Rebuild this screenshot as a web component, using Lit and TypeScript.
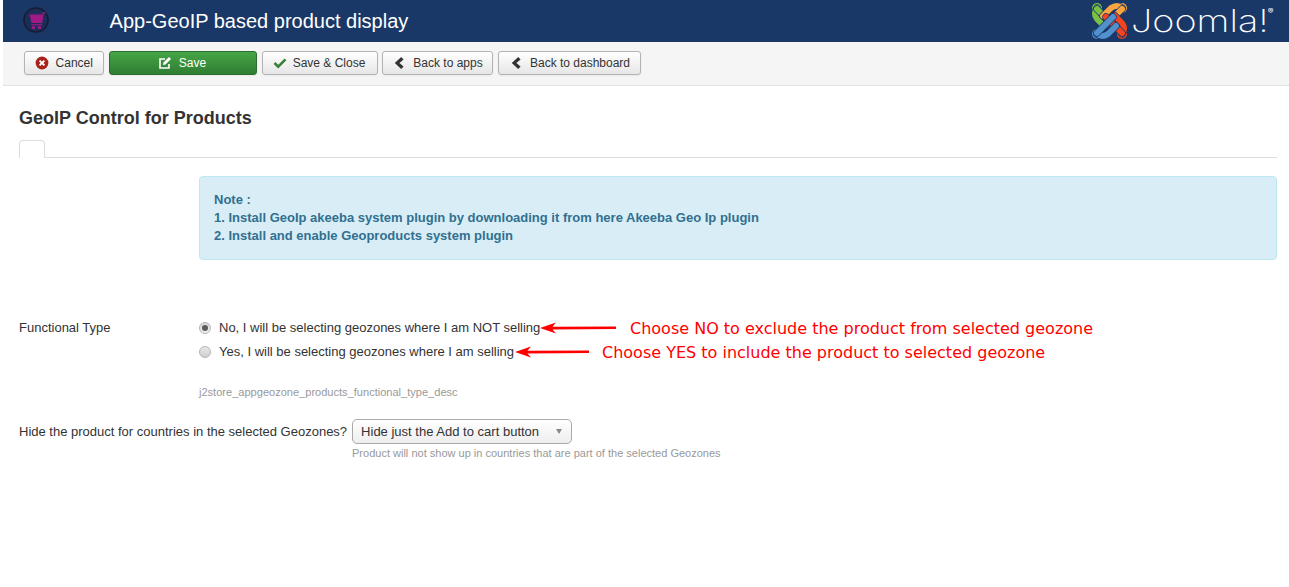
import { LitElement, html, css, svg } from "lit";
import { customElement } from "lit/decorators.js";

const chevron = svg`<path d="M9.2 1 L11.6 3.4 L7.4 7 L11.6 10.6 L9.2 13 L2.8 7 Z" fill="#333"/>`;

const band = (d: string, color: string) => svg`
  <path d=${d} stroke="#1a3867" stroke-width="7.4"/>
  <path d=${d} stroke=${color} stroke-width="6"/>`;

@customElement("app-root")
export class AppRoot extends LitElement {
  static styles = css`
    :host { display: block; height: 587px; overflow: hidden; position: relative; background: #fff; font-family: "Liberation Sans", Arial, sans-serif; font-size: 13px; line-height: 18px; color: #333; }
    .head { margin-left: 3px; height: 42px; background: #1a3867; display: flex; align-items: center; position: relative; }
    .cart { margin-left: 20px; width: 28px; height: 28px; flex: none; }
    .title { margin-left: 58.6px; color: #fff; font-size: 20px; line-height: 40px; }
    .logo { margin-left: auto; margin-right: 17px; display: flex; align-items: center; height: 42px; }
    .wordmark { color: #fff; font-family: "Inter", sans-serif; font-weight: 200; font-size: 31px; line-height: 42px; margin-left: 3px; position: relative; width: 141px; white-space: nowrap; transform: scaleX(1.22); transform-origin: left center; }
    .wordmark sup { font-size: 7px; position: absolute; top: -9px; left: 112px; font-weight: 400; line-height: 42px; }
    .bar { margin-left: 3px; height: 44px; box-sizing: border-box; background: #f5f5f5; border-bottom: 1px solid #e3e3e3; padding: 9px 0 0 21px; display: flex; gap: 5px; }
    .btn { height: 24px; box-sizing: border-box; border: 1px solid #b3b3b3; border-radius: 3px; background: linear-gradient(#fff, #e6e6e6); box-shadow: 0 1px 2px rgba(0,0,0,.05); font-size: 12px; line-height: 22px; color: #333; display: flex; align-items: center; justify-content: center; gap: 7px; }
    .btn svg { width: 14px; height: 14px; flex: none; }
    .cancel { width: 80px; gap: 6.5px; }
    .save { width: 148px; background: linear-gradient(#46a546, #2f7d32); border-color: #2a6f2d; color: #fff; gap: 7px; padding-right: 2px; }
    .sc { width: 116px; gap: 6px; padding-right: 2px; }
    .ba { width: 111px; margin-left: -1px; }
    .bd { width: 143px; }
    .main { padding: 0 12px 0 19px; }
    h2 { margin: 0; padding-top: 21px; font-size: 18px; line-height: 22px; font-weight: bold; color: #333; }
    .tabs { margin-top: 11px; height: 17px; border-bottom: 1px solid #ddd; }
    .tab { width: 26px; height: 18px; box-sizing: border-box; background: #fff; border: 1px solid #ddd; border-bottom: 0; border-radius: 4px 4px 0 0; }
    .alert { margin: 18px 0 0 180px; height: 84px; box-sizing: border-box; padding: 14px 14px; background: #d9edf7; border: 1px solid #bce8f1; border-radius: 4px; color: #31708f; font-weight: bold; }
    .row { display: flex; }
    .ftype { margin-top: 59px; }
    .lab { width: 180px; flex: none; line-height: 18px; }
    .radios { display: flex; flex-direction: column; gap: 6px; }
    .radio { display: flex; align-items: center; gap: 8px; height: 18px; }
    .dot { width: 12px; height: 12px; box-sizing: border-box; border-radius: 50%; border: 1px solid #b4b4b4; background: linear-gradient(#d6d6d6, #f2f2f2); display: flex; align-items: center; justify-content: center; }
    .dot.on::after { content: ""; width: 6px; height: 6px; border-radius: 50%; background: #5c5c5c; }
    .dot.off { background: linear-gradient(#e8e8e8, #cfcfcf); }
    .desc { margin: 23px 0 0 180px; font-size: 11.06px; line-height: 16px; color: #999; }
    .hide { margin-top: 19px; align-items: center; gap: 5px; }
    .select { width: 220px; height: 25px; box-sizing: border-box; border: 1px solid #aaa; border-radius: 5px; background: linear-gradient(#fff, #eee); display: flex; align-items: center; justify-content: space-between; padding: 0 9px 0 8px; font-size: 13.03px; }
    .caret { width: 0; height: 0; border-left: 3.5px solid transparent; border-right: 3.5px solid transparent; border-top: 5px solid #888; }
    .help { margin: 1px 0 0 333px; font-size: 11.03px; line-height: 16px; color: #999; }
    .note { position: absolute; color: #f00; font-family: "DejaVu Sans", sans-serif; font-size: 16px; line-height: 20px; white-space: nowrap; }
    .n1 { left: 630px; top: 319px; }
    .n2 { left: 602px; top: 343px; }
    .arrow { position: absolute; overflow: visible; }
    .a1 { left: 540px; top: 320px; }
    .a2 { left: 515px; top: 344px; }
  `;

  render() {
    return html`
      <div class="head">
        <svg class="cart" viewBox="0 0 28 28">
          <circle cx="13" cy="13" r="12" fill="#1b2d58" stroke="#171c30" stroke-width="1.6"/>
          <path d="M6.5 7.5 H20 L18.5 16 H8.5 Z" fill="#a01a86"/>
          <path d="M18.5 16.5 L20.2 5.8 H22.5" stroke="#a01a86" stroke-width="1.2" fill="none"/>
          <path d="M8.5 17.2 H19 V18.4 H8.5 Z" fill="#a01a86"/>
          <rect x="9" y="19.3" width="3" height="2.6" fill="#a01a86"/>
          <rect x="15" y="19.3" width="3" height="2.6" fill="#a01a86"/>
        </svg>
        <div class="title">App-GeoIP based product display</div>
        <div class="logo">
          <svg width="37" height="38" viewBox="0 0 37 38" fill="none" stroke-linecap="round" stroke-linejoin="round">
            <circle cx="6" cy="6" r="5" fill="#7ac143"/>
            <circle cx="31" cy="6" r="5" fill="#f9a541"/>
            <circle cx="6" cy="32" r="5" fill="#5091cd"/>
            <circle cx="31" cy="32" r="5" fill="#f44321"/>
            ${band("M6 6 Q2 12 6 17 L13 24", "#7ac143")}
            ${band("M6 7 L22 23", "#7ac143")}
            ${band("M31 6 Q26 2 20 6 L12 14", "#f9a541")}
            ${band("M31 7 L15 23", "#f9a541")}
            ${band("M31 32 Q35 26 31 21 L24 14", "#f44321")}
            ${band("M31 31 L15 15", "#f44321")}
            ${band("M6 32 Q11 36 17 32 L25 24", "#5091cd")}
            ${band("M6 31 L22 15", "#5091cd")}
          </svg>
          <span class="wordmark">Joomla!<sup>®</sup></span>
        </div>
      </div>
      <div class="bar">
        <div class="btn cancel">
          <svg viewBox="0 0 14 14"><circle cx="7" cy="7" r="6.4" fill="#a6231c"/><path d="M4.6 4.6 L9.4 9.4 M9.4 4.6 L4.6 9.4" stroke="#fff" stroke-width="2"/></svg>
          <span>Cancel</span>
        </div>
        <div class="btn save">
          <svg viewBox="0 0 14 14" fill="none"><path d="M11 8 V12 H2 V3 H7" stroke="#fff" stroke-width="1.6"/><path d="M5.5 6.5 L11 1 L13 3 L7.5 8.5 L5 9 Z" fill="#fff"/></svg>
          <span>Save</span>
        </div>
        <div class="btn sc">
          <svg viewBox="0 0 14 14" fill="none"><path d="M1.5 7 L5.2 10.6 L12.5 3.4" stroke="#378137" stroke-width="2.6"/></svg>
          <span>Save &amp; Close</span>
        </div>
        <div class="btn ba">
          <svg viewBox="0 0 14 14">${chevron}</svg>
          <span>Back to apps</span>
        </div>
        <div class="btn bd">
          <svg viewBox="0 0 14 14">${chevron}</svg>
          <span>Back to dashboard</span>
        </div>
      </div>
      <div class="main">
        <h2>GeoIP Control for Products</h2>
        <div class="tabs"><div class="tab"></div></div>
        <div class="alert">
          <div>Note :</div>
          <div>1. Install GeoIp akeeba system plugin by downloading it from here Akeeba Geo Ip plugin</div>
          <div>2. Install and enable Geoproducts system plugin</div>
        </div>
        <div class="row ftype">
          <div class="lab">Functional Type</div>
          <div class="radios">
            <div class="radio"><span class="dot on"></span>No, I will be selecting geozones where I am NOT selling</div>
            <div class="radio"><span class="dot off"></span>Yes, I will be selecting geozones where I am selling</div>
          </div>
        </div>
        <div class="desc">j2store_appgeozone_products_functional_type_desc</div>
        <div class="row hide">
          <div>Hide the product for countries in the selected Geozones?</div>
          <div class="select"><span>Hide just the Add to cart button</span><span class="caret"></span></div>
        </div>
        <div class="help">Product will not show up in countries that are part of the selected Geozones</div>
      </div>
      <svg class="arrow a1" width="76" height="16" viewBox="0 0 76 16"><path d="M0 8 L16 2.5 L12.5 6.7 L76 6.5 L76 9 L12.5 9.5 L16 13.5 Z" fill="#f00"/></svg>
      <svg class="arrow a2" width="74" height="16" viewBox="0 0 74 16"><path d="M0 8 L16 2.5 L12.5 6.7 L74 6.5 L74 9 L12.5 9.5 L16 13.5 Z" fill="#f00"/></svg>
      <div class="note n1">Choose NO to exclude the product from selected geozone</div>
      <div class="note n2">Choose YES to include the product to selected geozone</div>
    `;
  }
}
